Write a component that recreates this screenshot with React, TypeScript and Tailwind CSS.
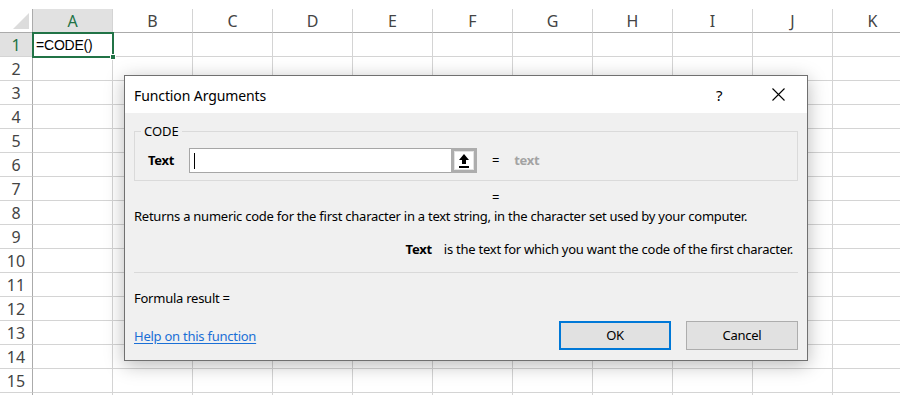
const cols = ["A", "B", "C", "D", "E", "F", "G", "H", "I", "J", "K"];
const rows = Array.from({ length: 16 }, (_, i) => i + 1);

const ui = { fontFamily: '"Noto Sans", "Open Sans", sans-serif' };
const sheet = { fontFamily: '"Noto Sans", "Open Sans", sans-serif' };
const cellFont = { fontFamily: '"Liberation Sans", Arial, sans-serif' };

function Corner() {
  return (
    <div className="h-[24px] w-[33px] shrink-0 border-b border-r border-[#ababab] flex items-end justify-end pr-[3px] pb-[3px]">
      <svg width="16" height="16" viewBox="0 0 16 16">
        <polygon points="16,0 16,16 0,16" fill="#dcdcdc" />
      </svg>
    </div>
  );
}

function RefArrow() {
  return (
    <svg width="12" height="14" viewBox="0 0 12 14">
      <polygon points="6,0 11,6 8,6 8,10 4,10 4,6 1,6" fill="#000" />
      <rect x="1" y="12" width="10" height="2" fill="#000" />
    </svg>
  );
}

function CloseIcon() {
  return (
    <svg width="13" height="13" viewBox="0 0 13 13">
      <path d="M0.5 0.5 L12.5 12.5 M12.5 0.5 L0.5 12.5" stroke="#000" strokeWidth="1.1" fill="none" />
    </svg>
  );
}

function Dialog() {
  return (
    <div
      className="absolute left-[124px] top-[75px] w-[684px] h-[286px] border border-[#707070] bg-[#f0f0f0] shadow-[0_4px_18px_rgba(0,0,0,0.28)] text-black flex flex-col"
      style={ui}
    >
      {/* title bar */}
      <div className="h-[37px] bg-white flex items-center shrink-0">
        <span className="pl-[9px] text-[14px] tracking-[-0.1px] pt-[2px]">Function Arguments</span>
        <span className="ml-auto text-[15px] pt-[2px] w-[14px]">?</span>
        <span className="ml-[42px] mr-[22px] flex items-center">
          <CloseIcon />
        </span>
      </div>

      <div className="flex flex-col px-[9px] text-[13px] tracking-[-0.25px]">
        {/* argument group */}
        <div className="relative mt-[18px] h-[50px] border border-[#dadada]">
          <span className="absolute left-[6px] -top-[10px] bg-[#f0f0f0] px-[3px] text-[13px] leading-[18px] tracking-normal">
            CODE
          </span>
          <div className="flex items-center pt-[16px]">
            <span className="w-[54px] pl-[13px] font-bold text-[13px]">Text</span>
            <div className="h-[25px] w-[262px] bg-white border border-r-0 border-[#a6a6a6] flex items-center pl-[4px]">
              <div className="h-[16px] w-px bg-black" />
            </div>
            <div className="h-[25px] w-[26px] border-[3px] border-[#adadad] bg-[#e3e3e3] p-px flex">
              <div className="flex-1 bg-white flex items-center justify-center">
                <RefArrow />
              </div>
            </div>
            <span className="ml-[15px]">=</span>
            <span className="ml-[15px] font-bold text-[#a3a3a3]">text</span>
          </div>
        </div>

        <div className="mt-[8px] h-[16px] leading-[16px] pl-[358px]">=</div>

        <div className="mt-[2px] h-[18px] leading-[18px] whitespace-nowrap">
          Returns a numeric code for the first character in a text string, in the character set used by your computer.
        </div>

        <div className="mt-[15px] h-[18px] leading-[18px] flex justify-end pr-[5px] whitespace-nowrap">
          <span className="font-bold mr-[12px]">Text</span>
          <span>is the text for which you want the code of the first character.</span>
        </div>

        <div className="mt-[14px] border-t border-[#d9d9d9]" />

        <div className="mt-[16px] h-[18px] leading-[18px]">Formula result =</div>

        <div className="mt-[14px] h-[29px] flex items-center">
          <span className="text-[#1a6fd6] underline underline-offset-2 pt-[3px]">Help on this function</span>
          <button className="ml-auto h-[29px] w-[112px] border-2 border-[#0078d7] bg-[#e1e1e1] text-[13px]">
            OK
          </button>
          <button className="ml-[15px] h-[29px] w-[112px] border border-[#adadad] bg-[#e1e1e1] text-[13px]">
            Cancel
          </button>
        </div>
      </div>
    </div>
  );
}

export default function App() {
  return (
    <div className="relative w-[900px] h-[395px] overflow-hidden bg-white" style={sheet}>
      {/* column headers */}
      <div className="flex pt-[9px]">
        <Corner />
        {cols.map((c) => (
          <div
            key={c}
            className={
              c === "A"
                ? "h-[24px] w-[80px] shrink-0 border-b border-r border-b-[#ababab] border-r-[#d4d4d4] bg-[#e1e1e1] text-[#217346] flex items-center justify-center text-[16px]"
                : "h-[24px] w-[80px] shrink-0 border-b border-r border-b-[#ababab] border-r-[#d4d4d4] text-[#444] flex items-center justify-center text-[16px]"
            }
          >
            {c}
          </div>
        ))}
      </div>

      {rows.map((r) => (
        <div key={r} className="flex">
          <div
            className={
              r === 1
                ? "h-[24px] w-[33px] shrink-0 border-b border-r border-b-[#d4d4d4] border-r-[#ababab] bg-[#e1e1e1] text-[#217346] flex items-center justify-center text-[16px]"
                : "h-[24px] w-[33px] shrink-0 border-b border-r border-b-[#d4d4d4] border-r-[#ababab] text-[#444] flex items-center justify-center text-[16px]"
            }
          >
            {r < 16 ? r : ""}
          </div>
          {cols.map((c) => (
            <div key={c} className="relative h-[24px] w-[80px] shrink-0 border-b border-r border-[#d4d4d4]">
              {r === 1 && c === "A" && (
                <div className="absolute -left-px -top-px z-10 h-[26px] w-[82px] border-2 border-[#217346] flex items-center pl-[2px]">
                  <span className="text-[14px] tracking-[-0.2px] text-black" style={cellFont}>
                    =CODE()
                  </span>
                  <div className="absolute -right-[4px] -bottom-[4px] h-[6px] w-[6px] bg-[#217346] border border-white" />
                </div>
              )}
            </div>
          ))}
        </div>
      ))}

      <Dialog />
    </div>
  );
}
